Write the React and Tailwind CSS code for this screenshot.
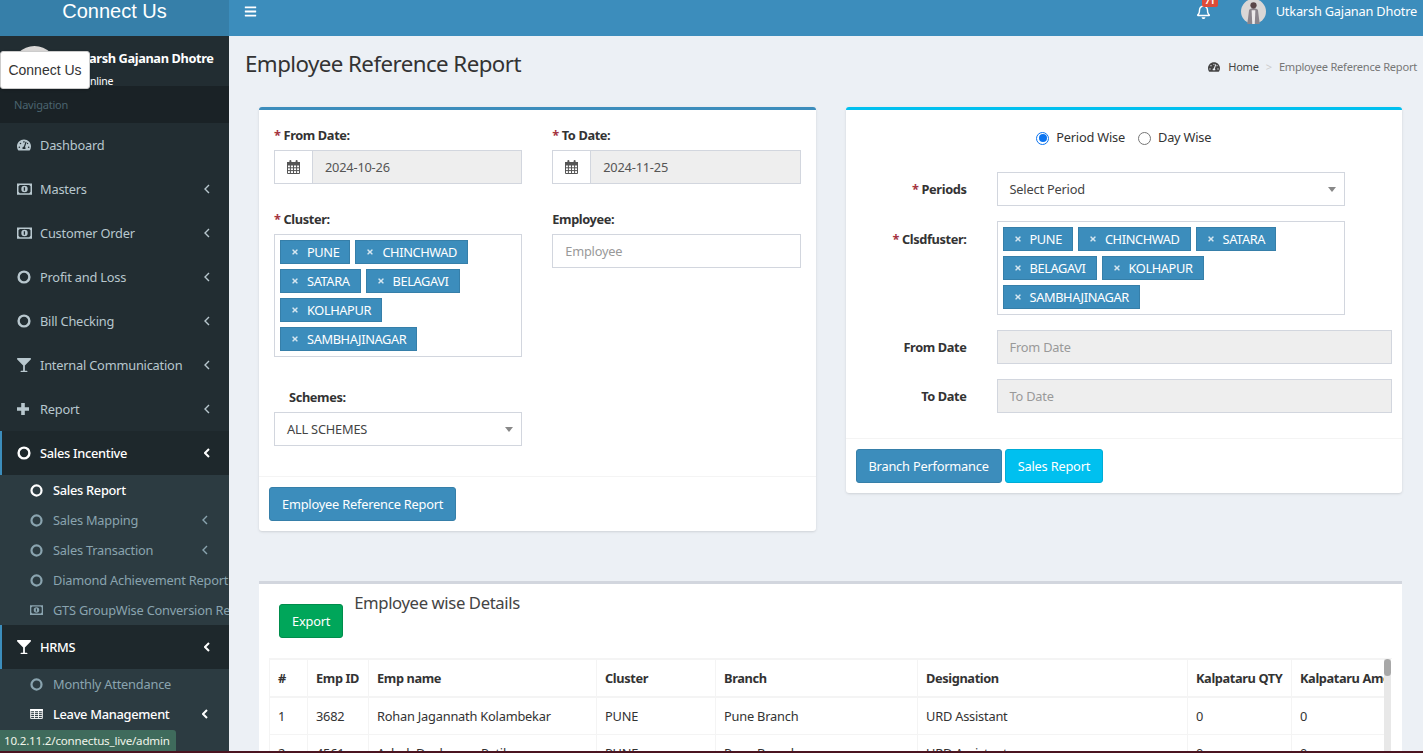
import React from "react";
import { FaTachometerAlt, FaGlassMartini, FaBars, FaRegBell, FaTimes } from "react-icons/fa";

const Circle = ({ className }) => (
  <svg viewBox="0 0 14 14" className={className}><circle cx="7" cy="7" r="5.4" fill="none" stroke="currentColor" strokeWidth="2.4" /></svg>
);
const Money = ({ className }) => (
  <svg viewBox="0 0 16 12" className={className}>
    <path fillRule="evenodd" fill="currentColor" d="M0 0H16V12H0Z M3 1.6H13L14.4 3V9L13 10.4H3L1.6 9V3Z M8 2.6A3.4 3.4 0 1 1 8 9.4A3.4 3.4 0 1 1 8 2.6Z M7.2 4.2H8.6V7.8H7.2Z" />
  </svg>
);
const Plus = ({ className }) => (
  <svg viewBox="0 0 12 12" className={className}><path fill="currentColor" d="M4.2 0H7.8V4.2H12V7.8H7.8V12H4.2V7.8H0V4.2H4.2Z" /></svg>
);
const TableIcon = ({ className }) => (
  <svg viewBox="0 0 14 11" className={className}>
    <path fill="none" stroke="currentColor" strokeWidth="1" d="M.6.6H13.4V10.4H.6Z M.6 3.6H13.4 M.6 5.9H13.4 M.6 8.2H13.4 M4.8.6V10.4 M9.2.6V10.4" />
    <rect x="0" y="0" width="14" height="2.2" fill="currentColor" />
  </svg>
);
const Calendar = ({ className }) => (
  <svg viewBox="0 0 13 14" className={className}>
    <path fill="none" stroke="currentColor" strokeWidth="1" d="M.5 2.5H12.5V13.5H.5Z M.5 5H12.5 M.5 7.8H12.5 M.5 10.6H12.5 M3.4 5V13.5 M6.5 5V13.5 M9.6 5V13.5" />
    <rect x="0" y="2" width="13" height="3" fill="currentColor" />
    <rect x="2.4" y="0" width="2" height="3.6" rx="1" fill="currentColor" />
    <rect x="8.6" y="0" width="2" height="3.6" rx="1" fill="currentColor" />
  </svg>
);
const Chevron = ({ bold }) => (
  <svg viewBox="0 0 6 10" className="w-[6px] h-[10px] shrink-0"><path d="M5 1L1 5L5 9" fill="none" stroke="currentColor" strokeWidth={bold ? 2 : 1.4} /></svg>
);

const Avatar = ({ className }) => (
  <svg viewBox="0 0 40 40" className={className}>
    <circle cx="20" cy="20" r="20" fill="#d9d7d6" />
    <path d="M10 40 L13 17 Q20 12 27 17 L30 40 Z" fill="#8b858c" />
    <path d="M17 18 L23 18 L22 40 L18 40 Z" fill="#ece9ea" />
    <circle cx="20" cy="10" r="5" fill="#5a4648" />
  </svg>
);

const Item = ({ icon: I, label, arrow = true, active, iconClass = "w-[14px] h-[14px]" }) => (
  <div className={`h-11 flex items-center pr-[19px] ${active ? "bg-[#1e282c] border-l-2 border-[#3c8dbc] pl-[15px] text-white font-medium tracking-[-0.022em]" : "pl-[17px] text-[#b8c7ce]"}`}>
    <span className="w-[15px] shrink-0 flex items-center"><I className={iconClass} /></span>
    <span className="ml-2 pt-px flex-1 whitespace-nowrap">{label}</span>
    {arrow && <Chevron bold={active} />}
  </div>
);

const Sub = ({ icon: I = Circle, label, arrow, active, iconClass = "w-[13px] h-[13px]" }) => (
  <div className={`h-[30px] flex items-center pl-[30px] ${arrow ? "pr-[21px]" : ""} ${active ? "text-white font-medium tracking-[-0.022em]" : "text-[#8aa4af]"}`}>
    <I className={`${iconClass} shrink-0`} />
    <span className="ml-[10px] pt-px whitespace-nowrap flex-1">{label}</span>
    {arrow && <Chevron bold={active} />}
  </div>
);

const Bold = "font-bold tracking-[-0.03em]";

const Req = ({ children }) => (
  <div className={`${Bold} text-[#333] leading-5`}><span className="text-[#a5343f]">* </span>{children}</div>
);

const Tag = ({ children }) => (
  <span className="inline-flex items-center h-6 px-[10px] bg-[#3c8dbc] border border-[#367fa9] text-white whitespace-nowrap tracking-[-0.03em]">
    <FaTimes className="w-[8px] h-[8px] text-[#d5e6f0] mr-[8px]" /><span className="pt-px">{children}</span>
  </span>
);

const tags = (
  <>
    <Tag>PUNE</Tag><Tag>CHINCHWAD</Tag><Tag>SATARA</Tag><Tag>BELAGAVI</Tag><Tag>KOLHAPUR</Tag><Tag>SAMBHAJINAGAR</Tag>
  </>
);

const DateField = ({ value }) => (
  <div className="flex h-[34px] border border-[#d2d6de]">
    <div className="w-[38px] flex items-center justify-center border-r border-[#d2d6de] bg-white">
      <Calendar className="w-[13px] h-[14px] text-[#555]" />
    </div>
    <div className="flex-1 bg-[#eee] text-[#555] flex items-center pl-3 pt-px">{value}</div>
  </div>
);

const Caret = () => <span className="w-0 h-0 border-x-4 border-x-transparent border-t-[5px] border-t-[#888]" />;

const Select = ({ children, className = "" }) => (
  <div className={`h-[34px] border border-[#d2d6de] bg-white flex items-center justify-between pl-3 pr-[8px] text-[#444] ${className}`}>
    <span className="pt-px">{children}</span><Caret />
  </div>
);

const RowLabel = ({ children, req }) => (
  <div className={`w-[121px] pt-px text-right ${Bold} text-[#333] shrink-0`}>{req && <span className="text-[#a5343f]">* </span>}{children}</div>
);

const Btn = ({ children, className = "" }) => (
  <button className={`h-[34px] px-3 pt-px border text-white rounded-[3px] whitespace-nowrap ${className}`}>{children}</button>
);

const heads = ["#", "Emp ID", "Emp name", "Cluster", "Branch", "Designation", "Kalpataru QTY", "Kalpataru Amount"];
const rows = [
  ["1", "3682", "Rohan Jagannath Kolambekar", "PUNE", "Pune Branch", "URD Assistant", "0", "0"],
  ["2", "4561", "Ashok Deoharam Patil", "PUNE", "Pune Branch", "URD Assistant", "0", "0"],
];
const Th = ({ children }) => <th className={`border border-[#f4f4f4] border-b-2 text-left ${Bold} px-2 pt-px h-[37px] whitespace-nowrap overflow-hidden text-[#333]`}>{children}</th>;
const Td = ({ children }) => <td className="border border-[#f4f4f4] px-2 pt-px h-[38px] whitespace-nowrap text-[#333]">{children}</td>;

export default function App() {
  return (
    <div className="relative w-[1423px] h-[753px] overflow-hidden flex bg-[#ecf0f5] text-[12.8px] tracking-[-0.016em] font-['Noto_Sans',sans-serif] text-[#333]">
      <aside className="w-[229px] shrink-0 bg-[#222d32] flex flex-col overflow-hidden">
        <div className="h-9 shrink-0 bg-[#367fa9] text-white text-[20px] tracking-normal font-['Liberation_Sans',sans-serif] text-center leading-[22px]">Connect Us</div>
        <div className="h-[50px] shrink-0 flex pl-[12px] pt-[10px]">
          <Avatar className="w-[45px] h-[45px] shrink-0" />
          <div className="ml-[10px] text-white">
            <div className={`${Bold} leading-5 mt-[2px] whitespace-nowrap`}>Utkarsh Gajanan Dhotre</div>
            <div className="text-[10.5px] leading-4 mt-[5px] pl-[15px]">Online</div>
          </div>
        </div>
        <div className="h-[37px] shrink-0 bg-[#1a2226] text-[#4b646f] text-[11px] flex items-center pl-[14px] pt-px">Navigation</div>
        <Item icon={FaTachometerAlt} label="Dashboard" arrow={false} />
        <Item icon={Money} label="Masters" iconClass="w-[16px] h-[12px]" />
        <Item icon={Money} label="Customer Order" iconClass="w-[16px] h-[12px]" />
        <Item icon={Circle} label="Profit and Loss" />
        <Item icon={Circle} label="Bill Checking" />
        <Item icon={FaGlassMartini} label="Internal Communication" />
        <Item icon={Plus} label="Report" iconClass="w-3 h-3" />
        <Item icon={Circle} label="Sales Incentive" active />
        <div className="bg-[#2c3b41]">
          <Sub label="Sales Report" active />
          <Sub label="Sales Mapping" arrow />
          <Sub label="Sales Transaction" arrow />
          <Sub label="Diamond Achievement Report" />
          <Sub icon={Money} iconClass="w-[13px] h-[10px]" label="GTS GroupWise Conversion Report" />
        </div>
        <Item icon={FaGlassMartini} label="HRMS" active />
        <div className="bg-[#2c3b41] flex-1">
          <Sub label="Monthly Attendance" />
          <Sub icon={TableIcon} iconClass="w-[13px] h-[10px]" label="Leave Management" arrow active />
        </div>
      </aside>

      <div className="flex-1 min-w-0 flex flex-col">
        <header className="h-9 shrink-0 bg-[#3c8dbc] flex items-center pl-[15px] pr-[6px] pb-[13px] text-white overflow-hidden">
          <FaBars className="w-[13px] h-[13px]" />
          <div className="flex-1" />
          <div className="relative mr-[30px]">
            <FaRegBell className="w-[15px] h-[15px]" />
            <span className="absolute -top-[9px] left-[6px] h-[12px] px-[3px] bg-[#dd4b39] text-[9px] font-bold leading-[12px] rounded-[2px]">71</span>
          </div>
          <Avatar className="w-[25px] h-[25px] mr-[10px]" />
          <span className="whitespace-nowrap">Utkarsh Gajanan Dhotre</span>
        </header>

        <div className="h-[71px] shrink-0 flex items-center justify-between pl-[16px] pr-[6px] pb-[20px] pt-[5px]">
          <h1 className="text-[22.3px] tracking-[-0.025em] text-[#333]">Employee Reference Report</h1>
          <div className="flex items-center text-[11.1px] tracking-[-0.022em] mt-[6px]">
            <FaTachometerAlt className="w-3 h-3 text-[#444] mr-2" />
            <span className="text-[#444]">Home</span>
            <span className="text-[#ccc] mx-[7px]">&gt;</span>
            <span className="text-[#777]">Employee Reference Report</span>
          </div>
        </div>

        <div className="pl-[30px] pr-[21px] flex flex-col">
          <div className="grid grid-cols-2 gap-[30px] items-start">
            <section className="bg-white border-t-[3px] border-[#3c8dbc] rounded-[3px] shadow-sm h-[424px] flex flex-col">
              <div className="flex-1 px-[15px] pt-[15px] grid grid-cols-2 gap-x-[30px] content-start">
                <div>
                  <Req>From Date:</Req>
                  <div className="mt-[5px]"><DateField value="2024-10-26" /></div>
                </div>
                <div>
                  <Req>To Date:</Req>
                  <div className="mt-[5px]"><DateField value="2024-11-25" /></div>
                </div>
                <div className="mt-[25px]">
                  <Req>Cluster:</Req>
                  <div className="mt-[5px] border border-[#d2d6de] h-[123px] px-[5px] pt-[5px] flex flex-wrap gap-[5px] content-start">{tags}</div>
                </div>
                <div className="mt-[25px]">
                  <div className={`${Bold} leading-5`}>Employee:</div>
                  <div className="mt-[5px] border border-[#d2d6de] h-[34px] flex items-center pl-3 pt-px text-[#999]">Employee</div>
                </div>
                <div className="mt-[30px]">
                  <div className={`${Bold} leading-5 pl-[15px]`}>Schemes:</div>
                  <Select className="mt-[5px]">ALL SCHEMES</Select>
                </div>
              </div>
              <div className="h-[55px] shrink-0 border-t border-[#f4f4f4] pl-[10px] pt-[10px]">
                <Btn className="bg-[#3c8dbc] border-[#367fa9]">Employee Reference Report</Btn>
              </div>
            </section>

            <section className="bg-white border-t-[3px] border-[#00c0ef] rounded-[3px] shadow-sm h-[386px] flex flex-col">
              <div className="flex-1 pr-[10px]">
                <div className="h-[62px] flex items-center justify-center pl-[10px] pb-[6px] gap-[7px]">
                  <span className="w-[13px] h-[13px] rounded-full border border-[#0b74f0] flex items-center justify-center"><span className="w-[8px] h-[8px] rounded-full bg-[#0b74f0]" /></span>
                  <span className="mr-[6px]">Period Wise</span>
                  <span className="w-[13px] h-[13px] rounded-full border border-[#767676]" />
                  <span>Day Wise</span>
                </div>
                <div className="flex items-center">
                  <RowLabel req>Periods</RowLabel>
                  <Select className="ml-[30px] w-[348px]">Select Period</Select>
                </div>
                <div className="flex items-start mt-[15px]">
                  <div className="pt-[8px]"><RowLabel req>Clsdfuster:</RowLabel></div>
                  <div className="ml-[30px] w-[348px] h-[94px] border border-[#d2d6de] pl-[5px] pt-[5px] flex flex-wrap gap-[5px] content-start">{tags}</div>
                </div>
                <div className="flex items-center mt-[15px]">
                  <RowLabel>From Date</RowLabel>
                  <div className="ml-[30px] flex-1 h-[34px] bg-[#eee] border border-[#d2d6de] flex items-center pl-3 pt-px text-[#999]">From Date</div>
                </div>
                <div className="flex items-center mt-[15px]">
                  <RowLabel>To Date</RowLabel>
                  <div className="ml-[30px] flex-1 h-[34px] bg-[#eee] border border-[#d2d6de] flex items-center pl-3 pt-px text-[#999]">To Date</div>
                </div>
              </div>
              <div className="h-[55px] shrink-0 border-t border-[#f4f4f4] pl-[10px] pt-[10px] flex gap-[3px]">
                <Btn className="bg-[#3c8dbc] border-[#367fa9]">Branch Performance</Btn>
                <Btn className="bg-[#00c0ef] border-[#00acd6]">Sales Report</Btn>
              </div>
            </section>
          </div>

          <section className="mt-[50px] bg-white border-t-[3px] border-[#d2d6de] h-[300px] px-[10px]">
            <div className="flex items-start h-[74px]">
              <Btn className="ml-[10px] mt-[20px] bg-[#00a65a] border-[#008d4c]">Export</Btn>
              <h3 className="ml-[11px] mt-[9px] text-[16.7px] tracking-[-0.023em] leading-5 text-[#444]">Employee wise Details</h3>
            </div>
            <div className="relative h-[200px] border-t border-[#f4f4f4] overflow-hidden">
              <table className="table-fixed border-collapse w-[1115px]">
                <colgroup>
                  <col className="w-[38px]" /><col className="w-[61px]" /><col className="w-[228px]" /><col className="w-[119px]" /><col className="w-[202px]" /><col className="w-[270px]" /><col className="w-[104px]" /><col className="w-[93px]" />
                </colgroup>
                <thead><tr>{heads.map((h) => <Th key={h}>{h}</Th>)}</tr></thead>
                <tbody>{rows.map((r) => <tr key={r[0]}>{r.map((c, i) => <Td key={i}>{c}</Td>)}</tr>)}</tbody>
              </table>
              <div className="absolute left-[1115px] top-0 w-[7px] h-full bg-[#e8e8e8]">
                <div className="h-[17px] bg-[#a8a8a8] rounded-full" />
              </div>
            </div>
          </section>
        </div>
      </div>

      <div className="absolute left-0 top-[51px] w-[90px] h-[38px] bg-white border border-[#ccc] rounded-[3px] shadow text-[14px] tracking-normal text-[#333] font-['Liberation_Sans',sans-serif] flex items-center justify-center">Connect Us</div>
      <div className="absolute left-0 top-[730px] h-[21px] w-[176px] bg-[#3f6b5c] rounded-tr-[3px] text-[#f0f4ea] text-[11.6px] flex items-center pl-[4px] whitespace-nowrap">10.2.11.2/connectus_live/admin</div>
      <div className="absolute left-0 bottom-0 w-full h-[2px] bg-[#4a1420]" />
    </div>
  );
}
